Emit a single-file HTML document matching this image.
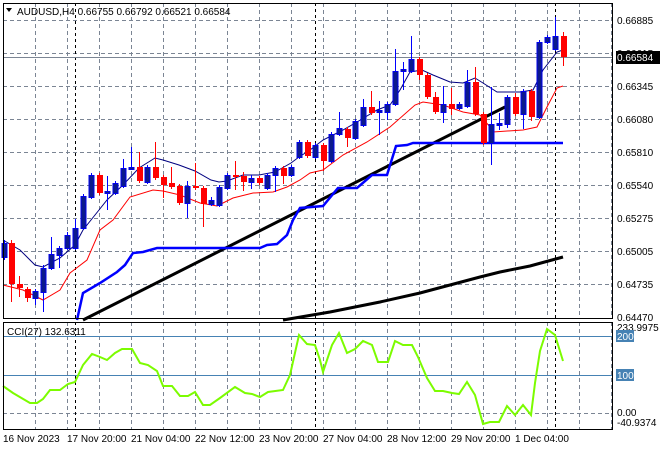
<!DOCTYPE html>
<html><head><meta charset="utf-8"><style>
html,body{margin:0;padding:0;background:#fff;}
svg{display:block;font-family:"Liberation Sans",sans-serif;font-size:10px;}
</style></head><body>
<svg width="660" height="450" viewBox="0 0 660 450" xmlns="http://www.w3.org/2000/svg">
<rect width="660" height="450" fill="#fff"/>
<!-- grid main -->
<g stroke="#7b8594" stroke-width="1" stroke-dasharray="4,3" fill="none">
<path d="M3 20.5H613M3 53.5H613M3 86.5H613M3 119.5H613M3 152.5H613M3 185.5H613M3 218.5H613M3 251.5H613M3 284.5H613"/>
<path d="M35.5 3V318M67.5 3V318M99.5 3V318M131.5 3V318M163.5 3V318M195.5 3V318M227.5 3V318M259.5 3V318M291.5 3V318M323.5 3V318M355.5 3V318M387.5 3V318M419.5 3V318M451.5 3V318M483.5 3V318M515.5 3V318M547.5 3V318M579.5 3V318M611.5 3V318"/>
<path d="M35.5 322V429M67.5 322V429M99.5 322V429M131.5 322V429M163.5 322V429M195.5 322V429M227.5 322V429M259.5 322V429M291.5 322V429M323.5 322V429M355.5 322V429M387.5 322V429M419.5 322V429M451.5 322V429M483.5 322V429M515.5 322V429M547.5 322V429M579.5 322V429M611.5 322V429"/>
<path d="M3 413.5H613"/>
</g>
<g stroke="#000" stroke-width="1" stroke-dasharray="3,3" fill="none">
<path d="M75.5 3V318M315.5 3V318M555.5 3V318M75.5 322V429M315.5 322V429M555.5 322V429"/>
</g>
<!-- current price line -->
<path d="M3 57.5H613" stroke="#7b8594" stroke-width="1"/>
<!-- CCI levels -->
<path d="M3 336.5H613M3 375.5H613" stroke="#4682b4" stroke-width="1"/>
<!-- thick black lines -->
<path d="M83 320L505 107" stroke="#000" stroke-width="3" fill="none"/>
<path d="M283 320L330 312L380 302L420 293L450 285L480 277L500 272L530 266L563 257" stroke="#000" stroke-width="3" fill="none"/>
<!-- blue thick step -->
<path d="M77 320L83 293L100 283L117 272L125 265L133 253L143 252L157 248L260 248L267 245L277 244L287 235L293 220L300 208L323 206L338 188L357 188L372 175L387 175L396 146L407 145L413 143L563 143" stroke="#0000ff" stroke-width="2.5" fill="none"/>
<!-- red MA -->
<path d="M3 285L23 290L43 300L60 290L70 273L87 260L100 230L113 220L130 197L153 190L163 191L180 195L200 203L217 206L233 198L253 193L273 192L287 187L300 180L310 173L323 170L343 155L367 142L390 127L415 105L423 102L443 105L463 112L480 115L490 127L493 132L523 130L537 127L547 107L557 88L563 86" stroke="#ff0000" stroke-width="1" fill="none"/>
<!-- navy MA -->
<path d="M3 240L20 250L35 265L43 267L60 258L75 245L83 230L99 210L107 200L123 185L139 168L155 158L163 160L179 165L195 171L211 180L219 182L227 181L243 175L259 175L275 172L291 163L299 157L310 150L323 140L343 130L357 122L377 110L390 105L400 90L410 72L422 70L433 75L450 82L463 83L475 78L483 83L497 92L520 92L533 90L543 70L557 52L563 50" stroke="#000080" stroke-width="1" fill="none"/>
<!-- candles -->
<g id="c"></g>
<g stroke-width="1">
<path stroke="#0000ff" d="M4.5 240V260M35.5 289V305M43.5 265V312M51.5 237V270M59.5 246V268M67.5 232V250M75.5 219V250M83.5 194V230M91.5 173V199M107.5 176V210M115.5 181V195M123.5 159V188M131.5 147V170M147.5 165V184M187.5 181V218M211.5 197V206M219.5 185V207M227.5 173V190M251.5 175V189M267.5 173V190M275.5 166V192M291.5 165V177M299.5 140V159M315.5 143V159M331.5 132V163M339.5 112V136M355.5 119V140M363.5 99V127M379.5 101V135M387.5 102V120M395.5 49V106M403.5 62V90M411.5 36V73M443.5 86V123M459.5 102V110M467.5 70V108M491.5 87V165M499.5 113V130M507.5 95V128M523.5 89V129M539.5 40V119M547.5 35V44M555.5 17V51"/>
<path stroke="#ff0000" d="M11.5 240V302M19.5 276V297M27.5 287V302M99.5 173V195M139.5 152V183M155.5 142V180M163.5 175V198M171.5 167V189M179.5 184V205M195.5 163V190M203.5 186V227M235.5 161V190M243.5 172V191M259.5 176V185M283.5 166V184M307.5 140V158M323.5 143V171M347.5 127V147M371.5 91V115M419.5 57V80M427.5 73V99M435.5 92V114M451.5 88V115M475.5 67V116M483.5 112V145M515.5 93V116M531.5 89V121M563.5 32V66"/>
</g>
<g fill="#0c1a8c" stroke="#0000ee" stroke-width="1">
<rect x="2" y="243.5" width="5" height="14"/><rect x="33" y="291.5" width="5" height="7"/><rect x="41" y="268.5" width="5" height="24"/><rect x="49" y="254.5" width="5" height="14"/><rect x="57" y="248.5" width="5" height="7"/><rect x="65" y="235.5" width="5" height="13"/><rect x="73" y="228.5" width="5" height="20"/><rect x="81" y="196.5" width="5" height="32"/><rect x="89" y="175.5" width="5" height="22"/><rect x="105" y="191.5" width="5" height="2"/><rect x="113" y="183.5" width="5" height="10"/><rect x="121" y="168.5" width="5" height="18"/><rect x="129" y="167.5" width="5" height="2"/><rect x="145" y="167.5" width="5" height="15"/><rect x="185" y="186.5" width="5" height="17"/><rect x="209" y="200.5" width="5" height="4"/><rect x="217" y="187.5" width="5" height="18"/><rect x="225" y="175.5" width="5" height="13"/><rect x="249" y="178.5" width="5" height="4"/><rect x="265" y="175.5" width="5" height="13"/><rect x="273" y="168.5" width="5" height="7"/><rect x="289" y="167.5" width="5" height="8"/><rect x="297" y="142.5" width="5" height="15"/><rect x="313" y="145.5" width="5" height="12"/><rect x="329" y="134.5" width="5" height="27"/><rect x="337" y="128.5" width="5" height="6"/><rect x="353" y="121.5" width="5" height="17"/><rect x="361" y="107.5" width="5" height="18"/><rect x="377" y="110.5" width="5" height="2"/><rect x="385" y="104.5" width="5" height="8"/><rect x="393" y="71.5" width="5" height="33"/><rect x="401" y="69.5" width="5" height="2"/><rect x="409" y="59.5" width="5" height="12"/><rect x="441" y="104.5" width="5" height="8"/><rect x="457" y="104.5" width="5" height="4"/><rect x="465" y="82.5" width="5" height="24"/><rect x="489" y="124.5" width="5" height="19"/><rect x="497" y="123.5" width="5" height="2"/><rect x="505" y="97.5" width="5" height="27"/><rect x="521" y="91.5" width="5" height="23"/><rect x="537" y="42.5" width="5" height="75"/><rect x="545" y="37.5" width="5" height="5"/><rect x="553" y="36.5" width="5" height="13"/>
</g>
<g fill="#ff0000">
<rect x="9" y="243" width="6" height="41"/><rect x="17" y="284" width="6" height="4"/><rect x="25" y="289" width="6" height="9"/><rect x="97" y="175" width="6" height="18"/><rect x="137" y="167" width="6" height="14"/><rect x="153" y="167" width="6" height="11"/><rect x="161" y="177" width="6" height="8"/><rect x="169" y="183" width="6" height="4"/><rect x="177" y="186" width="6" height="17"/><rect x="193" y="186" width="6" height="2"/><rect x="201" y="188" width="6" height="16"/><rect x="233" y="175" width="6" height="2"/><rect x="241" y="176" width="6" height="6"/><rect x="257" y="178" width="6" height="5"/><rect x="281" y="168" width="6" height="8"/><rect x="305" y="142" width="6" height="14"/><rect x="321" y="145" width="6" height="16"/><rect x="345" y="129" width="6" height="9"/><rect x="369" y="107" width="6" height="6"/><rect x="417" y="59" width="6" height="16"/><rect x="425" y="75" width="6" height="22"/><rect x="433" y="97" width="6" height="15"/><rect x="449" y="104" width="6" height="5"/><rect x="473" y="82" width="6" height="32"/><rect x="481" y="114" width="6" height="29"/><rect x="513" y="97" width="6" height="17"/><rect x="529" y="91" width="6" height="26"/><rect x="561" y="36" width="6" height="21"/>
</g>
<!-- CCI line -->
<path d="M3 386L13 393L30 403L37 403L43 399L50 390L60 390L68 384L75 382L83 365L92 354L100 357L107 360L115 353L122 349L132 349L140 363L148 365L157 371L163 386L172 386L180 396L188 396L195 392L203 405L210 405L220 398L235 387L245 393L252 394L260 397L268 392L283 390L290 375L299 335L307 344L315 345L320 360L323 372L332 345L339 333L347 353L355 349L363 341L372 345L378 362L388 362L395 341L403 345L412 345L418 357L427 378L435 391L443 391L452 393L459 394L467 382L475 395L483 424L490 422L499 422L507 406L515 415L523 405L531 415L535 383L540 351L547 329L555 335L563 361" stroke="#7cfc00" stroke-width="2" fill="none"/>
<!-- frames -->
<rect x="3.5" y="3.5" width="609" height="315" fill="none" stroke="#000"/>
<rect x="3.5" y="322.5" width="609" height="107" fill="none" stroke="#000"/>
<!-- title -->
<path d="M6 8L12 8L9 12Z" fill="#000"/>
<text x="17" y="15" fill="#000">AUDUSD,H4  0.66755 0.66792 0.66521 0.66584</text>
<text x="7" y="335" fill="#000">CCI(27) 132.6311</text>
<!-- price axis -->
<g fill="#000">
<text x="617" y="24">0.66885</text>
<text x="617" y="57">0.66615</text>
<text x="617" y="90">0.66345</text>
<text x="617" y="123">0.66080</text>
<text x="617" y="156">0.65810</text>
<text x="617" y="189">0.65540</text>
<text x="617" y="222">0.65275</text>
<text x="617" y="255">0.65005</text>
<text x="617" y="288">0.64735</text>
<text x="617" y="321">0.64470</text>
<text x="617" y="331">233.9975</text>
<text x="617" y="416">0.00</text>
<text x="617" y="426">-40.9374</text>
</g>
<rect x="616" y="51" width="44" height="13" fill="#000"/>
<text x="617" y="61" fill="#fff">0.66584</text>
<rect x="616" y="330" width="18" height="12" fill="#4682b4"/>
<text x="617" y="340" fill="#fff">200</text>
<rect x="616" y="369" width="18" height="12" fill="#4682b4"/>
<text x="617" y="379" fill="#fff">100</text>
<!-- time axis -->
<g fill="#000">
<text x="3" y="442">16 Nov 2023</text>
<text x="67" y="442">17 Nov 20:00</text>
<text x="131" y="442">21 Nov 04:00</text>
<text x="195" y="442">22 Nov 12:00</text>
<text x="259" y="442">23 Nov 20:00</text>
<text x="323" y="442">27 Nov 04:00</text>
<text x="387" y="442">28 Nov 12:00</text>
<text x="451" y="442">29 Nov 20:00</text>
<text x="515" y="442">1 Dec 04:00</text>
</g>
</svg>
</body></html>
